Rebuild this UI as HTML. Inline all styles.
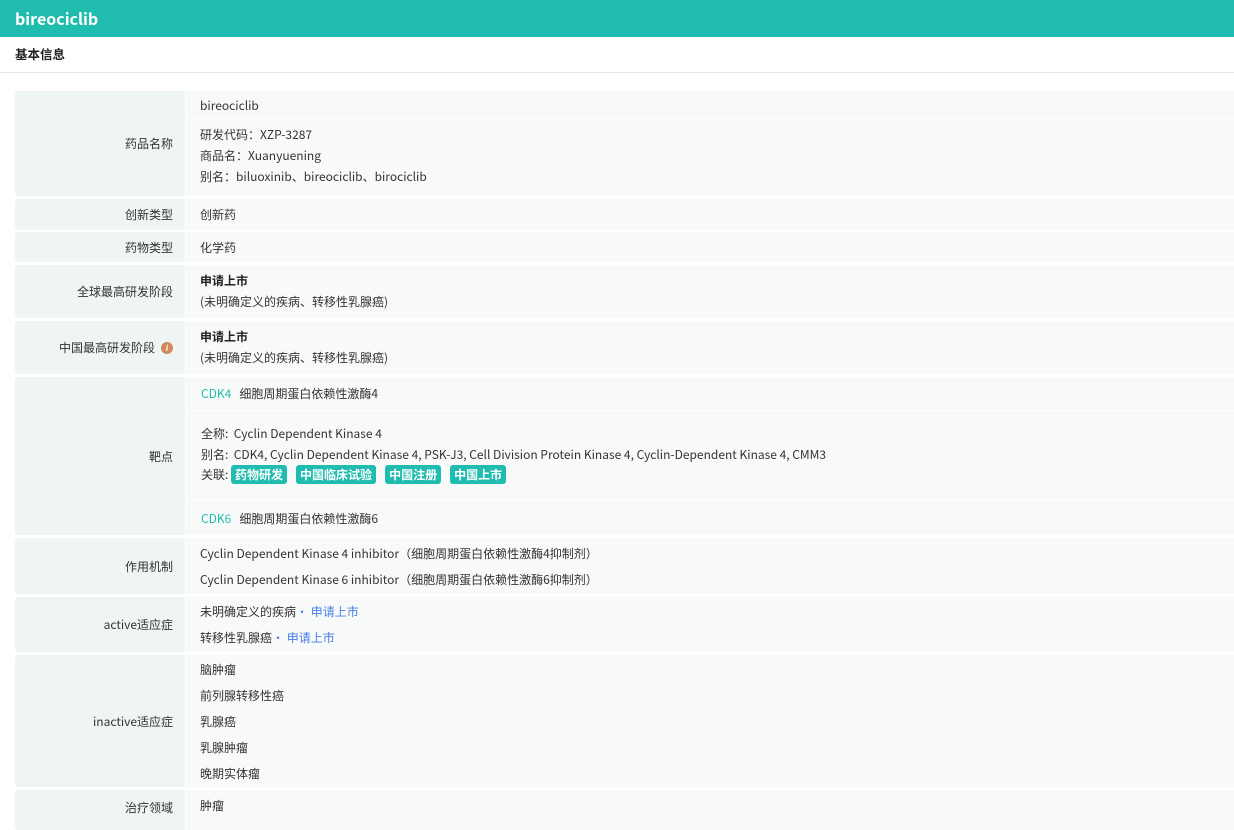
<!DOCTYPE html>
<html><head><meta charset="utf-8"><style>
*{margin:0;padding:0;box-sizing:border-box}
body{width:1234px;height:822px;overflow:hidden;background:#fff;font-family:"Noto Sans CJK SC","Liberation Sans",sans-serif;font-size:12px;color:#333;position:relative}
.hd{position:absolute;left:0;top:0;width:1234px;height:37px;background:#1fbcaf;color:#fff;font-weight:bold;font-size:16px;line-height:37px;padding-left:15px}
.sub{position:absolute;left:0;top:37px;width:1234px;height:36px;border-bottom:1px solid #e4e4e4;font-weight:bold;font-size:12.5px;line-height:34px;padding-left:15px;color:#222}
.l{position:absolute;left:15px;width:170px;background:#eef5f4;text-align:right;padding-right:12px;display:flex;align-items:center;justify-content:flex-end;color:#333;border-radius:3px 0 0 3px}
.c{position:absolute;left:186px;width:1048px;background:#f8fafa}
.t{position:absolute;left:200px;white-space:nowrap;line-height:16px}
.sep{position:absolute;left:186px;width:1048px;height:1px;background:#fff}
.b{font-weight:bold;color:#222}
.g{color:#1fbcaf}
.bl{color:#4a7ee8}
.tag{display:inline-block;background:#1fbcaf;color:#fff;font-weight:bold;border-radius:3px;padding:0 4px;line-height:19px;height:19px;margin-right:6px}
.i{display:inline-block;width:12px;height:12px;border-radius:50%;background:#d08a5c;color:#fff;font-size:9px;line-height:12px;text-align:center;font-style:italic;font-weight:bold;margin-left:6px;font-family:"Liberation Serif",serif}
</style></head><body>
<div class="hd">bireociclib</div>
<div class="sub">基本信息</div>

<div class="l" style="top:91px;height:105px">药品名称</div>
<div class="c" style="top:91px;height:105px"></div>
<div class="sep" style="top:118px"></div>
<div class="t" style="top:98px">bireociclib</div>
<div class="t" style="top:127px">研发代码：XZP-3287</div>
<div class="t" style="top:148px">商品名：Xuanyuening</div>
<div class="t" style="top:169px">别名：biluoxinib、bireociclib、birociclib</div>

<div class="l" style="top:199px;height:31px">创新类型</div>
<div class="c" style="top:199px;height:31px"></div>
<div class="t" style="top:207px">创新药</div>

<div class="l" style="top:232px;height:30px">药物类型</div>
<div class="c" style="top:232px;height:30px"></div>
<div class="t" style="top:240px">化学药</div>

<div class="l" style="top:265px;height:53px">全球最高研发阶段</div>
<div class="c" style="top:265px;height:53px"></div>
<div class="t b" style="top:273px">申请上市</div>
<div class="t" style="top:294px">(未明确定义的疾病、转移性乳腺癌)</div>

<div class="l" style="top:321px;height:53px">中国最高研发阶段<span class="i">i</span></div>
<div class="c" style="top:321px;height:53px"></div>
<div class="t b" style="top:329px">申请上市</div>
<div class="t" style="top:350px">(未明确定义的疾病、转移性乳腺癌)</div>

<div class="l" style="top:377px;height:158px">靶点</div>
<div class="c" style="top:377px;height:158px"></div>
<div class="sep" style="top:410px"></div>
<div class="sep" style="top:500px"></div>
<div class="t" style="top:386px;left:201px"><span class="g">CDK4</span>&nbsp;&nbsp; 细胞周期蛋白依赖性激酶4</div>
<div class="t" style="top:426px;left:201px">全称:&nbsp; Cyclin Dependent Kinase 4</div>
<div class="t" style="top:447px;left:201px">别名:&nbsp; CDK4, Cyclin Dependent Kinase 4, PSK-J3, Cell Division Protein Kinase 4, Cyclin-Dependent Kinase 4, CMM3</div>
<div class="t" style="top:465px;left:201px;line-height:19px">关联:&nbsp;<span class="tag">药物研发</span><span class="tag" style="margin-left:3px">中国临床试验</span><span class="tag" style="margin-left:3px">中国注册</span><span class="tag" style="margin-left:3px">中国上市</span></div>
<div class="t" style="top:511px;left:201px"><span class="g">CDK6</span>&nbsp;&nbsp; 细胞周期蛋白依赖性激酶6</div>

<div class="l" style="top:538px;height:56px">作用机制</div>
<div class="c" style="top:538px;height:56px"></div>
<div class="t" style="top:546px">Cyclin Dependent Kinase 4 inhibitor（细胞周期蛋白依赖性激酶4抑制剂）</div>
<div class="t" style="top:572px">Cyclin Dependent Kinase 6 inhibitor（细胞周期蛋白依赖性激酶6抑制剂）</div>

<div class="l" style="top:597px;height:55px">active适应症</div>
<div class="c" style="top:597px;height:55px"></div>
<div class="t" style="top:604px">未明确定义的疾病<span class="bl">•&nbsp;申请上市</span></div>
<div class="t" style="top:630px">转移性乳腺癌<span class="bl">•&nbsp;申请上市</span></div>

<div class="l" style="top:655px;height:132px">inactive适应症</div>
<div class="c" style="top:655px;height:132px"></div>
<div class="t" style="top:662px">脑肿瘤</div>
<div class="t" style="top:688px">前列腺转移性癌</div>
<div class="t" style="top:714px">乳腺癌</div>
<div class="t" style="top:740px">乳腺肿瘤</div>
<div class="t" style="top:766px">晚期实体瘤</div>

<div class="l" style="top:790px;height:40px;align-items:flex-start;padding-top:9px">治疗领域</div>
<div class="c" style="top:790px;height:40px"></div>
<div class="t" style="top:798px">肿瘤</div>
</body></html>
